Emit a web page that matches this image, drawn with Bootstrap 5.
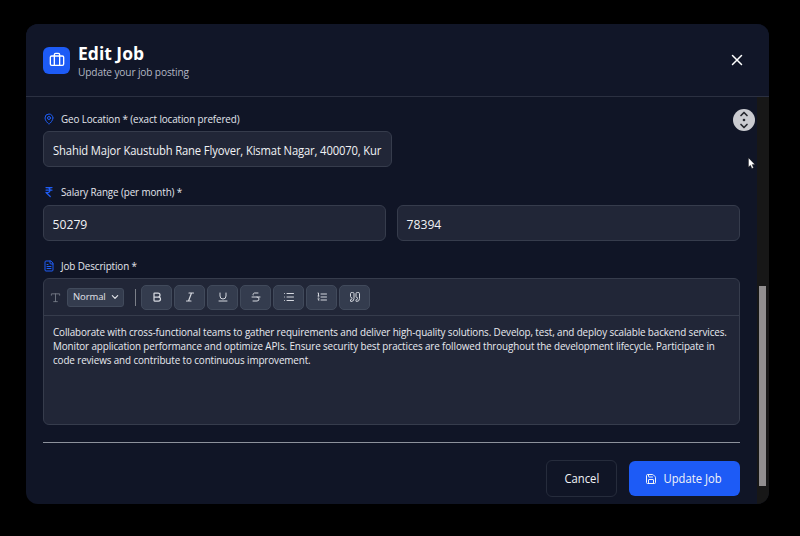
<!DOCTYPE html>
<html lang="en" data-bs-theme="dark">
<head>
<meta charset="utf-8">
<meta name="viewport" content="width=device-width, initial-scale=1">
<title>Edit Job</title>
<link href="https://cdn.jsdelivr.net/npm/bootstrap@5.3.0/dist/css/bootstrap.min.css" rel="stylesheet">
<style>
body{background:#000;font-family:"Open Sans","Noto Sans",sans-serif;color:#e6e8ee;overflow:hidden;height:536px}
svg{display:block;fill:none;stroke:currentColor;stroke-width:2;stroke-linecap:round;stroke-linejoin:round;flex:none}
.narrow{display:inline-block;transform:scaleX(.922);transform-origin:0 50%}
.dialog{width:743px;height:480px;margin:24px 0 0 26px;background:#101526;border-radius:12px;overflow:hidden;position:relative}
.dialog-head{height:73px;border-bottom:1px solid #2b3041;padding:0 24px 0 17px;background:#111628}
.logo{width:27px;height:27px;border-radius:6px;background:#1d5bf6;color:#fff}
.title{font-size:17.5px;font-weight:700;line-height:20px;color:#fff;margin:2px 0 0}
.subtitle{font-size:11px;line-height:14px;color:#b3b8c4;letter-spacing:-.15px;margin-top:2px}
.pane{width:731px;padding:15px 17px 0 17px}
.track{width:12px;background:#171717;padding:189px 3px 0 2px}
.thumb{height:200px;width:7px;background:#918e8f}
.lbl{height:14px;gap:5.5px;font-size:10.7px;line-height:14px;color:#e3e6ed;margin-bottom:5px;white-space:nowrap;letter-spacing:-.12px}
.lbl svg{color:#1f5df5}
.lbl.pay-lbl{margin-bottom:6px}
.field{height:36px;border:1px solid #363c4c;border-radius:6px;background:#212637;padding:1px 8.5px 0;font-size:12.2px;color:#f1f2f5;line-height:36px;white-space:nowrap}
.geo{width:349px;margin-bottom:18px;letter-spacing:-.15px}
.pay{gap:11px;margin-bottom:18px}
.editor{height:147px;border:1px solid #363c4c;border-radius:6px;background:#212637}
.tools{height:37px;border-bottom:1px solid #363c4c;padding:0 6px}
.style-pick{width:57px;height:19px;background:#343c4e;border:1px solid #414a5b;border-radius:3px;font-size:9.5px;color:#e3e5ea;padding:0 4px 0 5px;margin-left:6px}
.style-pick span{letter-spacing:-.1px}
.rule{width:1px;height:17px;background:#7b7f88;margin:0 5px 0 11px}
.tool{width:31px;height:25px;background:#343c4e;border:1px solid #414a5b;border-radius:5px;color:#d5d8df;padding:0;margin-right:2px}
.copy{padding:9px 8.5px;width:675px;font-size:10.7px;line-height:14.2px;color:#e8eaf0;white-space:nowrap;letter-spacing:-.12px}
.copy .narrow{display:block;width:max-content}
.foot-line{height:1px;background:#8d929c;margin-top:17px}
.actions{gap:12px;margin-top:18px}
.b-cancel,.b-save{font-size:12.2px;border-radius:6px;height:35px;padding:2px 0 0;color:#f1f3f7;line-height:1}
.b-cancel .narrow,.b-save .narrow{transform-origin:50% 50%}
.b-cancel{width:71px;height:37px;border:1px solid #262c3c;margin-top:-1px}
.b-save{width:111px;background:#1d5bf6;border:0;gap:4px}
.b-save svg{margin-top:-1px}
.scroll-mark{position:absolute;left:706.500px;top:85px;width:22px;height:22px;border-radius:50%;background:#cacbd0;color:#25272e}
.pointer{position:absolute;left:748px;top:157px;stroke-width:1}
</style>
</head>
<body>
<main class="dialog">
  <header class="dialog-head d-flex align-items-center">
    <div class="logo d-flex align-items-center justify-content-center"><svg width="16" height="16" viewBox="0 0 24 24"><path d="M16 20V4a2 2 0 0 0-2-2h-4a2 2 0 0 0-2 2v16"/><rect x="2" y="6" width="20" height="14" rx="2"/></svg></div>
    <div class="ms-2 flex-grow-1"><h1 class="title"><span>Edit Job</span></h1><div class="subtitle"><span class="narrow">Update your job posting</span></div></div>
    <svg width="16" height="16" viewBox="0 0 24 24" color="#fff"><path d="M18 6 6 18M6 6l12 12" transform="translate(-1.5 -1.5) scale(1.125)"/></svg>
  </header>
  <div class="d-flex" style="height:407px">
    <section class="pane">
      <label class="lbl d-flex align-items-center"><svg width="12" height="12" viewBox="0 0 24 24"><path d="M20 10c0 5-5.500 10.200-7.400 11.800a1 1 0 0 1-1.200 0C9.500 20.200 4 15 4 10a8 8 0 0 1 16 0"/><circle cx="12" cy="10" r="3"/></svg><span class="narrow">Geo Location * (exact location prefered)</span></label>
      <div class="field geo"><span class="narrow">Shahid Major Kaustubh Rane Flyover, Kismat Nagar, 400070, Kur</span></div>
      <label class="lbl pay-lbl d-flex align-items-center"><svg width="12" height="12" viewBox="0 0 24 24"><path d="M6 3h12M6 8h12M6 13l8.500 8M6 13h3M9 13c6.667 0 6.667-10 0-10" stroke-width="2.500"/></svg><span class="narrow">Salary Range (per month) *</span></label>
      <div class="pay d-flex"><div class="field flex-fill w-50">50279</div><div class="field flex-fill w-50">78394</div></div>
      <label class="lbl d-flex align-items-center"><svg width="12" height="12" viewBox="0 0 24 24"><path d="M15 2H6a2 2 0 0 0-2 2v16a2 2 0 0 0 2 2h12a2 2 0 0 0 2-2V7ZM14 2v4a2 2 0 0 0 2 2h4M10 9H8M16 13H8M16 17H8"/></svg><span class="narrow">Job Description *</span></label>
      <div class="editor">
        <div class="tools d-flex align-items-center">
          <svg width="11" height="11" viewBox="0 0 24 24" color="#747985"><path d="M3 7V4h18v3M12 4v17M8 21h8"/></svg>
          <div class="style-pick d-flex align-items-center justify-content-between"><span>Normal</span><svg width="8" height="8" viewBox="0 0 24 24"><path d="m4 8 8 8 8-8" stroke-width="3.500"/></svg></div>
          <div class="rule"></div>
          <button class="tool btn d-flex align-items-center justify-content-center"><svg width="12" height="12" viewBox="0 0 24 24"><path d="M6 12h9a4 4 0 0 1 0 8H7a1 1 0 0 1-1-1V5a1 1 0 0 1 1-1h7a4 4 0 0 1 0 8" stroke-width="2.500"/></svg></button>
          <button class="tool btn d-flex align-items-center justify-content-center"><svg width="12" height="12" viewBox="0 0 24 24"><path d="M19 4h-9M14 20H5M15 4 9 20" stroke-width="2.400"/></svg></button>
          <button class="tool btn d-flex align-items-center justify-content-center"><svg width="12" height="12" viewBox="0 0 24 24"><path d="M6 4v6a6 6 0 0 0 12 0V4M4 20h16"/></svg></button>
          <button class="tool btn d-flex align-items-center justify-content-center"><svg width="12" height="12" viewBox="0 0 24 24"><path d="M16 4H9a3 3 0 0 0-2.830 4M14 12a4 4 0 0 1 0 8H6M4 12h16"/></svg></button>
          <button class="tool btn d-flex align-items-center justify-content-center"><svg width="12" height="12" viewBox="0 0 24 24"><path d="M8 5h13M8 12h13M8 19h13M3 5h.01M3 12h.01M3 19h.01"/></svg></button>
          <button class="tool btn d-flex align-items-center justify-content-center"><svg width="12" height="12" viewBox="0 0 24 24"><path d="M10 6h11M10 12h11M10 18h11M4 4h1v6M4 10h2M6 18H4c0-1 2-2 2-3s-1-1.500-2-1"/></svg></button>
          <button class="tool btn d-flex align-items-center justify-content-center"><svg width="12" height="12" viewBox="0 0 24 24"><path d="M16 3a2 2 0 0 0-2 2v6a2 2 0 0 0 2 2 1 1 0 0 1 1 1v1a2 2 0 0 1-2 2 1 1 0 0 0-1 1v2a1 1 0 0 0 1 1 6 6 0 0 0 6-6V5a2 2 0 0 0-2-2zM5 3a2 2 0 0 0-2 2v6a2 2 0 0 0 2 2 1 1 0 0 1 1 1v1a2 2 0 0 1-2 2 1 1 0 0 0-1 1v2a1 1 0 0 0 1 1 6 6 0 0 0 6-6V5a2 2 0 0 0-2-2z"/></svg></button>
        </div>
        <div class="copy">
          <div class="narrow">Collaborate with cross-functional teams to gather requirements and deliver high-quality solutions. Develop, test, and deploy scalable backend services.</div>
          <div class="narrow">Monitor application performance and optimize APIs. Ensure security best practices are followed throughout the development lifecycle. Participate in</div>
          <div class="narrow">code reviews and contribute to continuous improvement.</div>
        </div>
      </div>
      <div class="foot-line"></div>
      <div class="actions d-flex justify-content-end">
        <button class="b-cancel btn"><span class="narrow">Cancel</span></button>
        <button class="b-save btn d-flex align-items-center justify-content-center"><svg width="12" height="12" viewBox="0 0 24 24"><path d="M15.200 3a2 2 0 0 1 1.400.600l3.800 3.800a2 2 0 0 1 .6 1.400V19a2 2 0 0 1-2 2H5a2 2 0 0 1-2-2V5a2 2 0 0 1 2-2zM17 21v-7a1 1 0 0 0-1-1H8a1 1 0 0 0-1 1v7M7 3v4a1 1 0 0 0 1 1h7"/></svg><span class="narrow">Update Job</span></button>
      </div>
    </section>
    <div class="track"><div class="thumb"></div></div>
  </div>
  <div class="scroll-mark d-flex align-items-center justify-content-center"><svg width="18" height="20" viewBox="0 0 18 20"><path d="m6 5.500 3-3 3 3M6 14.500l3 3 3-3" stroke-width="1.700"/><circle cx="9" cy="10" r="1.300" fill="currentColor" stroke="none"/></svg></div>
</main>
<svg class="pointer" width="8" height="13" viewBox="0 0 8 13"><path d="M.5 1v9l2-1.800 1.400 3.300 1.600-.7-1.400-3.200h2.700z" fill="#fff" stroke="#222" stroke-width=".4"/></svg>
<script src="https://cdn.jsdelivr.net/npm/bootstrap@5.3.0/dist/js/bootstrap.bundle.min.js"></script>
</body>
</html>
